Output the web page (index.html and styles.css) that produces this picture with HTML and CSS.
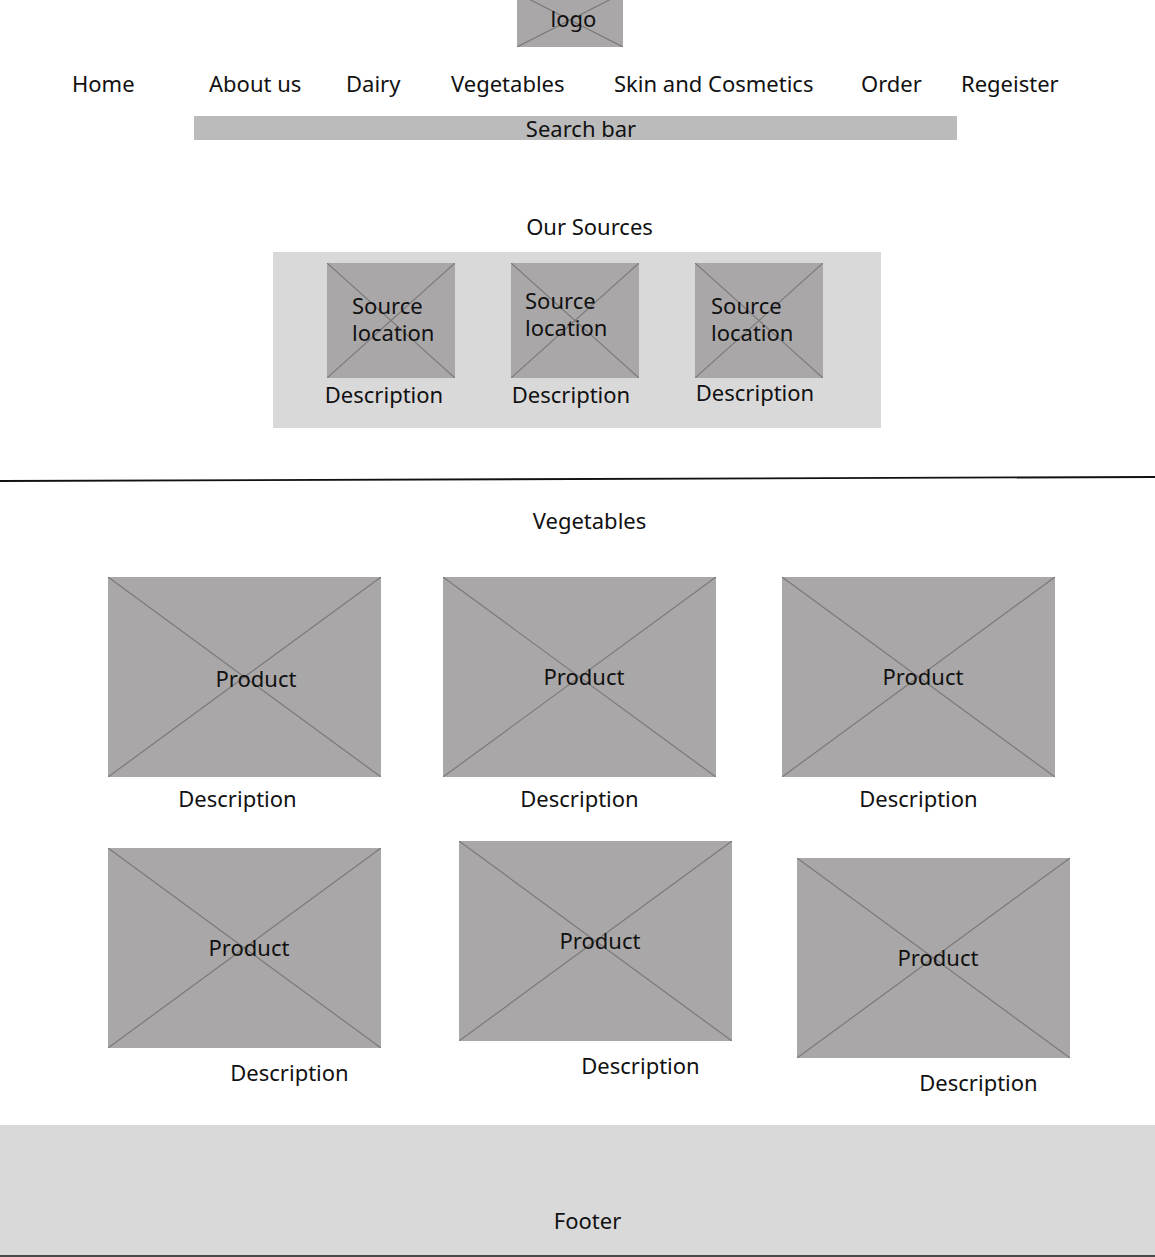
FILE: index.html
```html
<!DOCTYPE html>
<html lang="en">
<head>
    <meta charset="UTF-8">
    <meta name="viewport" content="width=device-width, initial-scale=1.0">
    <title>Farm Shop</title>
    <link rel="stylesheet" href="styles.css">
</head>
<body>

<header class="site-header">
    <div class="placeholder logo">
        <svg class="cross" viewBox="0 0 100 100" preserveAspectRatio="none"><line x1="0" y1="0" x2="100" y2="100"/><line x1="100" y1="0" x2="0" y2="100"/></svg>
        <span class="logo-label">logo</span>
    </div>

    <nav class="main-nav">
        <a href="#">Home</a>
        <a href="#">About us</a>
        <a href="#">Dairy</a>
        <a href="#">Vegetables</a>
        <a href="#">Skin and Cosmetics</a>
        <a href="#">Order</a>
        <a href="#">Regeister</a>
    </nav>

    <div class="search-bar">Search bar</div>
</header>

<section class="sources-section">
    <h2 class="section-title">Our Sources</h2>
    <div class="sources">
        <div class="source-card">
            <div class="placeholder source-img">
                <svg class="cross" viewBox="0 0 100 100" preserveAspectRatio="none"><line x1="0" y1="0" x2="100" y2="100"/><line x1="100" y1="0" x2="0" y2="100"/></svg>
                <span class="source-label">Source<br>location</span>
            </div>
            <p class="source-desc">Description</p>
        </div>
        <div class="source-card">
            <div class="placeholder source-img">
                <svg class="cross" viewBox="0 0 100 100" preserveAspectRatio="none"><line x1="0" y1="0" x2="100" y2="100"/><line x1="100" y1="0" x2="0" y2="100"/></svg>
                <span class="source-label">Source<br>location</span>
            </div>
            <p class="source-desc">Description</p>
        </div>
        <div class="source-card">
            <div class="placeholder source-img">
                <svg class="cross" viewBox="0 0 100 100" preserveAspectRatio="none"><line x1="0" y1="0" x2="100" y2="100"/><line x1="100" y1="0" x2="0" y2="100"/></svg>
                <span class="source-label">Source<br>location</span>
            </div>
            <p class="source-desc">Description</p>
        </div>
    </div>
</section>

<svg class="divider" viewBox="0 0 1155 6" preserveAspectRatio="none"><line x1="0" y1="5" x2="1155" y2="1"/></svg>

<section class="products-section">
    <h2 class="section-title">Vegetables</h2>
    <div class="products">
        <div class="product">
            <div class="placeholder product-img">
                <svg class="cross" viewBox="0 0 100 100" preserveAspectRatio="none"><line x1="0" y1="0" x2="100" y2="100"/><line x1="100" y1="0" x2="0" y2="100"/></svg>
                <span class="product-label">Product</span>
            </div>
            <p class="product-desc">Description</p>
        </div>
        <div class="product">
            <div class="placeholder product-img">
                <svg class="cross" viewBox="0 0 100 100" preserveAspectRatio="none"><line x1="0" y1="0" x2="100" y2="100"/><line x1="100" y1="0" x2="0" y2="100"/></svg>
                <span class="product-label">Product</span>
            </div>
            <p class="product-desc">Description</p>
        </div>
        <div class="product">
            <div class="placeholder product-img">
                <svg class="cross" viewBox="0 0 100 100" preserveAspectRatio="none"><line x1="0" y1="0" x2="100" y2="100"/><line x1="100" y1="0" x2="0" y2="100"/></svg>
                <span class="product-label">Product</span>
            </div>
            <p class="product-desc">Description</p>
        </div>
        <div class="product lower">
            <div class="placeholder product-img">
                <svg class="cross" viewBox="0 0 100 100" preserveAspectRatio="none"><line x1="0" y1="0" x2="100" y2="100"/><line x1="100" y1="0" x2="0" y2="100"/></svg>
                <span class="product-label">Product</span>
            </div>
            <p class="product-desc">Description</p>
        </div>
        <div class="product lower">
            <div class="placeholder product-img">
                <svg class="cross" viewBox="0 0 100 100" preserveAspectRatio="none"><line x1="0" y1="0" x2="100" y2="100"/><line x1="100" y1="0" x2="0" y2="100"/></svg>
                <span class="product-label">Product</span>
            </div>
            <p class="product-desc">Description</p>
        </div>
        <div class="product lower">
            <div class="placeholder product-img">
                <svg class="cross" viewBox="0 0 100 100" preserveAspectRatio="none"><line x1="0" y1="0" x2="100" y2="100"/><line x1="100" y1="0" x2="0" y2="100"/></svg>
                <span class="product-label">Product</span>
            </div>
            <p class="product-desc">Description</p>
        </div>
    </div>
</section>

<footer class="site-footer">Footer</footer>

</body>
</html>
```

FILE: styles.css
```css
body {
    font-family: 'Noto Sans', 'Open Sans', sans-serif;
    font-size: 22px;
    line-height: 30px;
    margin: 0;
    padding: 0;
    background-color: #fff;
    color: #111;
    overflow: hidden;
}

h2, p {
    margin: 0;
    font-size: 22px;
    font-weight: normal;
}

/* grey box with an X, used for every image */
.placeholder {
    display: grid;
    background-color: #a9a7a8;
}

.placeholder > * {
    grid-area: 1 / 1;
}

.cross {
    display: block;
    width: 100%;
    height: 100%;
}

.cross line {
    stroke: #7b797a;
    stroke-width: 1.2;
    vector-effect: non-scaling-stroke;
}

/* header */
.logo {
    width: 106px;
    height: 54px;
    margin: -7px 0 0 517px;
}

.logo-label {
    align-self: center;
    justify-self: center;
    padding: 0 0 5px 7px;
    line-height: 30px;
}

.main-nav {
    display: grid;
    grid-template-columns: 137px 137px 105px 163px 247px 100px auto;
    padding-left: 72px;
    margin-top: 21px;
}

.main-nav a {
    color: #111;
    text-decoration: none;
}

.search-bar {
    width: 763px;
    height: 24px;
    margin: 18px 0 0 194px;
    padding-left: 11px;
    box-sizing: border-box;
    line-height: 24px;
    text-align: center;
    background-color: #bbbbbb;
}

.section-title {
    text-align: center;
    padding-left: 24px;
}

/* sources */
.sources-section {
    margin-top: 71px;
}

.sources {
    display: flex;
    gap: 56px;
    width: 608px;
    height: 176px;
    margin: 11px 0 0 273px;
    padding: 11px 0 0 54px;
    box-sizing: border-box;
    background-color: #d9d9d9;
}

.source-card {
    width: 128px;
}

.source-img {
    height: 115px;
}

.source-label {
    align-self: start;
    justify-self: start;
    padding: 29px 0 0 25px;
    line-height: 27px;
}

.source-card:nth-child(2) .source-label {
    padding: 24px 0 0 14px;
}

.source-card:nth-child(3) .source-label {
    padding-left: 16px;
}

.source-desc {
    margin: 1px 0 0 -8px;
    text-align: center;
}

.source-card:first-child .source-desc {
    margin-left: -14px;
}

.source-card:nth-child(3) .source-desc {
    margin-top: -1px;
}

.divider {
    display: block;
    width: 100%;
    height: 6px;
    margin-top: 48px;
}

.divider line {
    stroke: #111;
    stroke-width: 1.8;
}

/* products */
.products-section .section-title {
    margin-top: 23px;
}

.products {
    display: grid;
    grid-template-columns: repeat(3, 273px);
    column-gap: 64px;
    row-gap: 28px;
    align-items: start;
    justify-items: start;
    padding-left: 108px;
    margin-top: 42px;
}

.product {
    width: 273px;
}

.product-img {
    height: 200px;
}

.product-label {
    align-self: center;
    justify-self: center;
    padding: 0 0 2px 9px;
}

.product:first-child .product-label {
    padding: 2px 0 0 23px;
}

.product-desc {
    margin-top: 6px;
    text-align: center;
}

.product:first-child .product-desc {
    padding-right: 14px;
}

.product.lower .product-desc {
    margin-top: 9px;
    padding-left: 90px;
}

.product:nth-child(2) {
    margin-left: -2px;
}

.product:nth-child(4) {
    margin-top: 7px;
}

.product:nth-child(5) {
    margin-left: 14px;
}

.product:nth-child(6) {
    margin: 17px 0 0 15px;
}

.site-footer {
    height: 132px;
    margin-top: 28px;
    padding: 80px 0 0 20px;
    box-sizing: border-box;
    text-align: center;
    background-color: #d9d9d9;
    border-bottom: 2px solid #4a4a4a;
}
```
